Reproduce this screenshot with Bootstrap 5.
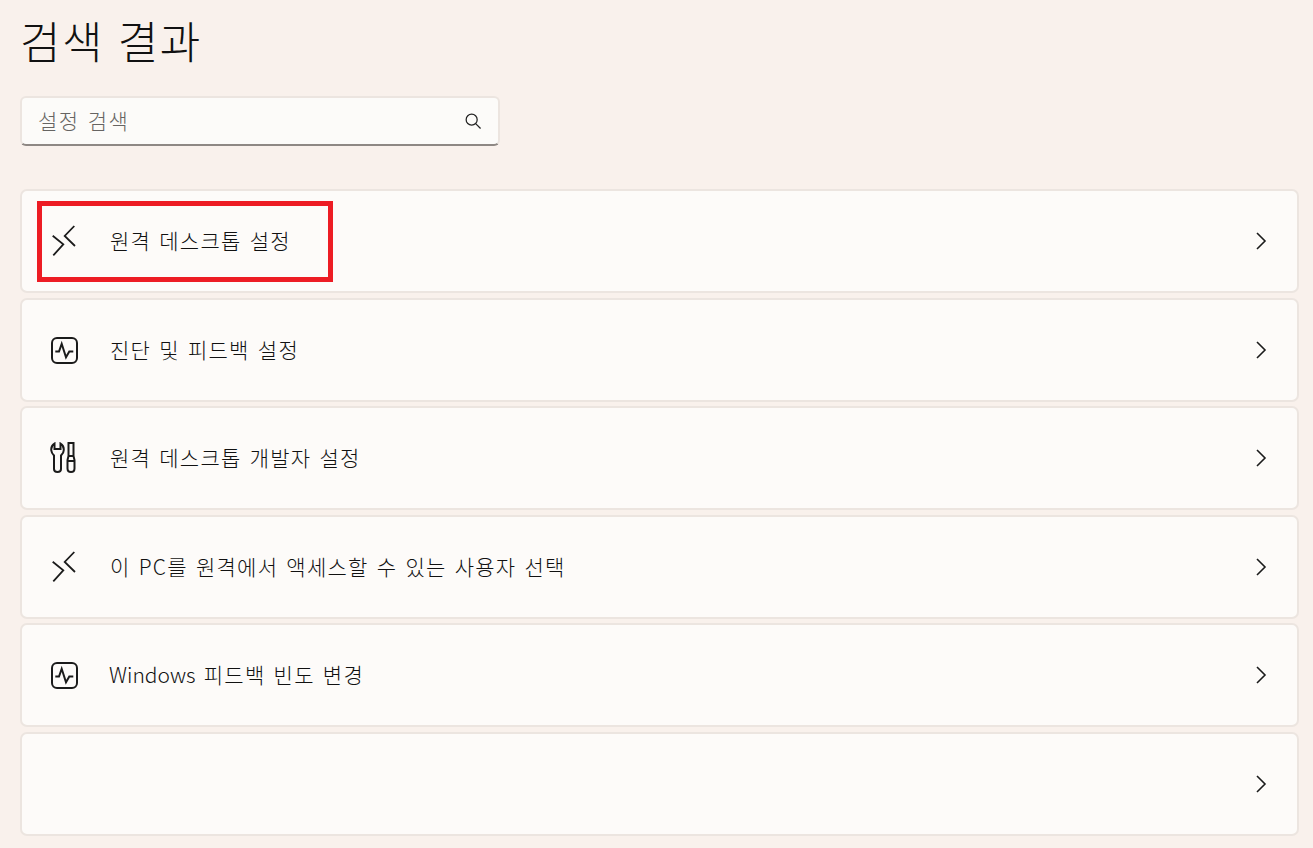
<!DOCTYPE html>
<html lang="ko">
<head>
  <meta charset="UTF-8">
  <title>검색 결과</title>
  <link href="https://cdn.jsdelivr.net/npm/bootstrap@5.3.0/dist/css/bootstrap.min.css" rel="stylesheet">
  <style>
    html, body { height: 100%; }
    body {
      background: #f9f1ec;
      color: #1b1b1b;
      font-family: "Noto Sans CJK KR", "Noto Sans", sans-serif;
      overflow: hidden;
    }
    .page-wrap { padding: 0 14px 0 20px; }
    .page-title {
      font-size: 44px;
      font-weight: 300;
      line-height: 60px;
      letter-spacing: 1.5px;
      margin: 10px 0 26px;
      height: 60px;
      color: #111;
    }
    .search-box {
      width: 480px;
      height: 50px;
      background: #fcfbf9;
      border: 2px solid #ece5e0;
      border-bottom: 2px solid #8e8884;
      border-radius: 6px;
      padding: 0 17px 0 16px;
      margin-bottom: 43px;
    }
    .search-text { font-size: 21px; font-weight: 300; color: #666462; letter-spacing: 1.4px; word-spacing: 1px; padding-bottom: 1px; }
    .result-list { gap: 4.5px; }
    .result-row {
      position: relative;
      height: 104px;
      background: #fdfbf9;
      border: 2px solid #ece5e0;
      border-radius: 7px;
      padding: 0 29px 0 28px;
    }
    .row-icon { width: 32px; height: 32px; margin-right: 28px; flex-shrink: 0; }
    .row-label { font-size: 21px; font-weight: 300; letter-spacing: 1.25px; word-spacing: 1px; line-height: 1; padding-bottom: 1px; color: #111; }
    .latin-part { letter-spacing: 0; margin-left: -1px; }
    .row-chevron { width: 14px; height: 18px; }
    .red-mark {
      position: absolute;
      left: 15px;
      top: 10px;
      width: 296px;
      height: 81px;
      border: 5px solid #ed1c24;
    }
    svg { display: block; }
  </style>
</head>
<body>
  <div class="page-wrap">
    <h1 class="page-title">검색 결과</h1>

    <div class="search-box d-flex align-items-center justify-content-between">
      <span class="search-text">설정 검색</span>
      <svg width="16" height="16" viewBox="0 0 18 18" fill="none" stroke="#222" stroke-width="1.4">
        <circle cx="7.5" cy="7.5" r="6.2"/>
        <path d="M12 12 17.500 17.500"/>
      </svg>
    </div>

    <div class="result-list d-flex flex-column">
      <div class="result-row d-flex align-items-center">
        <svg class="row-icon" viewBox="0 0 32 32" fill="none" stroke="#1b1b1b" stroke-width="1.8">
          <path d="M2.700 10.700 13.300 19.300 3.300 30.300"/>
          <path d="M24.300 1 14.700 11 25 21"/>
        </svg>
        <span class="row-label">원격 데스크톱 설정</span>
        <svg class="row-chevron ms-auto" viewBox="0 0 14 18" fill="none" stroke="#1b1b1b" stroke-width="1.6">
          <path d="M3 1 11 9 3 17"/>
        </svg>
        <div class="red-mark"></div>
      </div>

      <div class="result-row d-flex align-items-center">
        <svg class="row-icon" viewBox="0 0 32 32" fill="none" stroke="#1b1b1b" stroke-width="2">
          <rect x="2" y="4" width="25" height="25" rx="5"/>
          <path d="M5.300 17.500H9L11.700 9.800 16 23.200 19.300 17.500H23.300"/>
        </svg>
        <span class="row-label">진단 및 피드백 설정</span>
        <svg class="row-chevron ms-auto" viewBox="0 0 14 18" fill="none" stroke="#1b1b1b" stroke-width="1.6">
          <path d="M3 1 11 9 3 17"/>
        </svg>
      </div>

      <div class="result-row d-flex align-items-center">
        <svg class="row-icon" viewBox="0 0 32 32" fill="none" stroke="#1b1b1b" stroke-width="2">
          <path d="M4.500 1.500C2 3 1 6 1.300 8.500 1.500 11 3 12.500 4 13.500V27C4 29.500 5.500 30 7.500 30 9.500 30 11 29.500 11 27V13.500C12 12.500 13.700 11 13.700 8.500 14 6 13 3 10.500 1.500V7H4.500Z"/>
          <path d="M18.500 1H23.500V14H18.500ZM18.500 14 17.500 18V26.500C17.500 29.500 19 30 21 30 23 30 24.500 29.500 24.500 26.500V18L23.500 14M17.500 19H24.500"/>
        </svg>
        <span class="row-label">원격 데스크톱 개발자 설정</span>
        <svg class="row-chevron ms-auto" viewBox="0 0 14 18" fill="none" stroke="#1b1b1b" stroke-width="1.6">
          <path d="M3 1 11 9 3 17"/>
        </svg>
      </div>

      <div class="result-row d-flex align-items-center">
        <svg class="row-icon" viewBox="0 0 32 32" fill="none" stroke="#1b1b1b" stroke-width="1.8">
          <path d="M2.700 10.700 13.300 19.300 3.300 30.300"/>
          <path d="M24.300 1 14.700 11 25 21"/>
        </svg>
        <span class="row-label">이 PC를 원격에서 액세스할 수 있는 사용자 선택</span>
        <svg class="row-chevron ms-auto" viewBox="0 0 14 18" fill="none" stroke="#1b1b1b" stroke-width="1.6">
          <path d="M3 1 11 9 3 17"/>
        </svg>
      </div>

      <div class="result-row d-flex align-items-center">
        <svg class="row-icon" viewBox="0 0 32 32" fill="none" stroke="#1b1b1b" stroke-width="2">
          <rect x="2" y="4" width="25" height="25" rx="5"/>
          <path d="M5.300 17.500H9L11.700 9.800 16 23.200 19.300 17.500H23.300"/>
        </svg>
        <span class="row-label"><span class="latin-part">Windows</span> 피드백 빈도 변경</span>
        <svg class="row-chevron ms-auto" viewBox="0 0 14 18" fill="none" stroke="#1b1b1b" stroke-width="1.6">
          <path d="M3 1 11 9 3 17"/>
        </svg>
      </div>

      <div class="result-row d-flex align-items-center">
        <svg class="row-chevron ms-auto" viewBox="0 0 14 18" fill="none" stroke="#1b1b1b" stroke-width="1.6">
          <path d="M3 1 11 9 3 17"/>
        </svg>
      </div>
    </div>
  </div>

  <script src="https://cdn.jsdelivr.net/npm/bootstrap@5.3.0/dist/js/bootstrap.bundle.min.js"></script>
</body>
</html>
